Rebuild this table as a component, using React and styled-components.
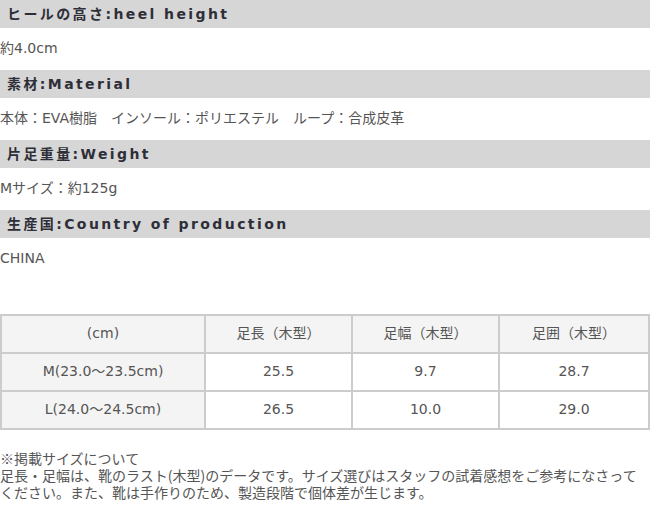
import styled, { createGlobalStyle } from "styled-components";

const GlobalStyle = createGlobalStyle`
  html, body {
    margin: 0;
    padding: 0;
    background: #fff;
  }
  body {
    font-family: "DejaVu Sans", "Noto Sans CJK JP", sans-serif;
    color: #555;
    font-size: 14px;
  }
`;

const specs = [
  { title: "ヒールの高さ:heel height", body: "約4.0cm" },
  { title: "素材:Material", body: "本体：EVA樹脂　インソール：ポリエステル　ループ：合成皮革" },
  { title: "片足重量:Weight", body: "Mサイズ：約125g" },
  { title: "生産国:Country of production", body: "CHINA" },
];

const rows = [
  ["M(23.0～23.5cm)", "25.5", "9.7", "28.7"],
  ["L(24.0～24.5cm)", "26.5", "10.0", "29.0"],
];

export default function App() {
  return (
    <>
      <GlobalStyle />
      <Page>
        {specs.map((s) => (
          <Spec key={s.title}>
            <SpecTitle>{s.title}</SpecTitle>
            <SpecBody>{s.body}</SpecBody>
          </Spec>
        ))}
        <SizeTable>
          <thead>
            <tr>
              <Head $w={204}>(cm)</Head>
              <Head $w={147}>足長（木型）</Head>
              <Head $w={147}>足幅（木型）</Head>
              <Head>足囲（木型）</Head>
            </tr>
          </thead>
          <tbody>
            {rows.map((r) => (
              <tr key={r[0]}>
                <Head>{r[0]}</Head>
                <Cell>{r[1]}</Cell>
                <Cell>{r[2]}</Cell>
                <Cell>{r[3]}</Cell>
              </tr>
            ))}
          </tbody>
        </SizeTable>
        <Note>
          ※掲載サイズについて
          <br />
          足長・足幅は、靴のラスト(木型)のデータです。サイズ選びはスタッフの試着感想をご参考になさってください。また、靴は手作りのため、製造段階で個体差が生じます。
        </Note>
      </Page>
    </>
  );
}

const Page = styled.div`
  width: 650px;
`;

const Spec = styled.section`
  display: flex;
  flex-direction: column;
`;

const SpecTitle = styled.h3`
  margin: 0;
  height: 28px;
  box-sizing: border-box;
  display: flex;
  align-items: center;
  padding: 0 0 3px 7px;
  background: #d6d6d6;
  color: #2e2e38;
  font-family: "DejaVu Sans", "Noto Sans CJK JP", sans-serif;
  font-size: 14px;
  font-weight: bold;
  letter-spacing: 2.4px;
`;

const SpecBody = styled.p`
  margin: 0;
  height: 42px;
  box-sizing: border-box;
  padding-bottom: 3px;
  display: flex;
  align-items: center;
  line-height: 1;
`;

const SizeTable = styled.table`
  margin-top: 34px;
  width: 650px;
  border-collapse: collapse;
  border: 2px solid #ccc;
  table-layout: fixed;
`;

const Head = styled.th`
  width: ${(p) => (p.$w ? `${p.$w}px` : "auto")};
  height: 38px;
  box-sizing: border-box;
  border: 2px solid #ccc;
  background: #f4f4f4;
  font-weight: normal;
  text-align: center;
  padding: 0 0 2px;
  line-height: 1;
`;

const Cell = styled.td`
  height: 38px;
  box-sizing: border-box;
  border: 2px solid #ccc;
  text-align: center;
  padding: 0 0 2px;
  line-height: 1;
`;

const Note = styled.p`
  margin: 20px 0 0;
  line-height: 17px;
  font-family: "Noto Sans CJK JP", sans-serif;
`;
